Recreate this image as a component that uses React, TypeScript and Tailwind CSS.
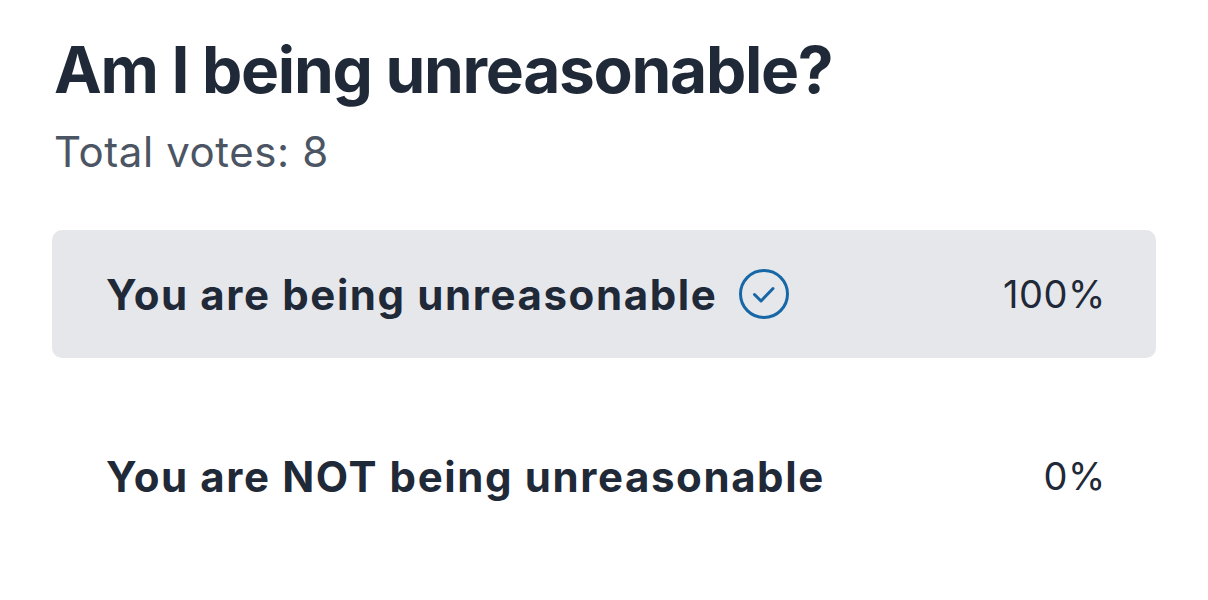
import React from "react";

function CheckCircle() {
  return (
    <svg width="52" height="52" viewBox="0 0 52 52" fill="none" className="shrink-0">
      <circle cx="26" cy="26" r="23.5" stroke="#1767a7" strokeWidth="3" />
      <path d="M16.5 26.5 L23 33 L35 20.5" stroke="#1767a7" strokeWidth="3" strokeLinecap="round" strokeLinejoin="round" />
    </svg>
  );
}

export default function App() {
  return (
    <div className="w-[1208px] h-[600px] bg-white pl-[52px] pr-[52px] pt-[32px]" style={{ fontFamily: "Inter, 'Noto Sans', sans-serif" }}>
      <h1 className="text-[64px] leading-[76px] font-bold text-[#1f2937] tracking-[-1.3px] pl-[2px]">Am I being unreasonable?</h1>
      <p className="text-[42px] leading-[52px] text-[#4b5563] mt-[18px] pl-[2px] tracking-[0.6px]">Total votes: 8</p>
      <div className="mt-[52px] flex flex-col gap-[54px]">
        <div className="h-[128px] rounded-[10px] bg-[#e5e7eb] flex items-center justify-between pl-[54px] pr-[50px]">
          <div className="flex items-center gap-[21px]">
            <span className="text-[42px] font-bold text-[#1f2937] tracking-[1.6px]">You are being unreasonable</span>
            <CheckCircle />
          </div>
          <span className="text-[38px] text-[#1f2937] tracking-[0.6px]">100%</span>
        </div>
        <div className="h-[128px] rounded-[10px] flex items-center justify-between pl-[54px] pr-[50px]">
          <span className="text-[42px] font-bold text-[#1f2937] tracking-[1.6px]">You are NOT being unreasonable</span>
          <span className="text-[38px] text-[#1f2937] tracking-[0.6px]">0%</span>
        </div>
      </div>
    </div>
  );
}
